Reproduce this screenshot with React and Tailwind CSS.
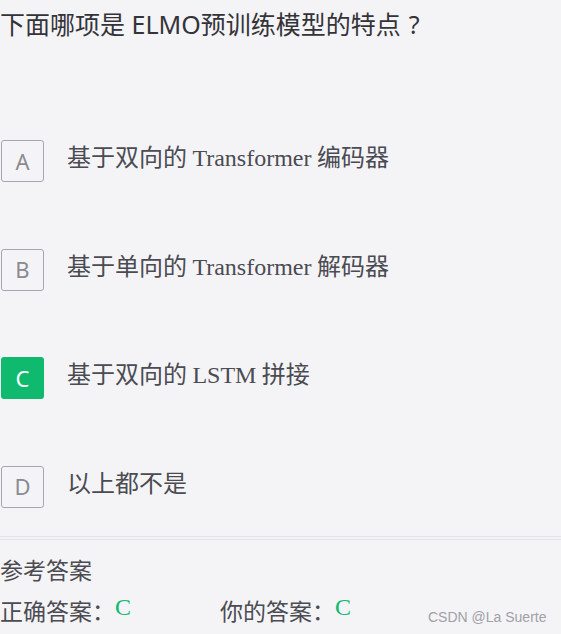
export default function App() {
  const options = [
    { k: "A", t: ["基于双向的 ", "Transformer", " 编码器"] },
    { k: "B", t: ["基于单向的 ", "Transformer", " 解码器"] },
    { k: "C", t: ["基于双向的 ", "LSTM", " 拼接"], ok: true },
    { k: "D", t: ["以上都不是"] },
  ];
  return (
    <div className="w-[561px] h-[634px] bg-[#f4f4f7] overflow-hidden relative">
      <div className="pt-[6px] text-[25px] leading-[36px] text-[#333338] font-['Noto_Sans','Noto_Sans_CJK_SC',sans-serif]">
        下面哪项是 ELMO预训练模型的特点<span className="ml-[8px]">?</span>
      </div>
      <div className="mt-[98px] flex flex-col gap-[66.6px] pl-[1px]">
        {options.map((o) => (
          <div key={o.k} className="flex items-center h-[42px]">
            <div
              className={
                o.ok
                  ? "w-[43px] h-[42px] rounded-[3px] bg-[#0fba6f] text-white flex items-center justify-center text-[22px] font-['Noto_Sans',sans-serif]"
                  : "w-[43px] h-[42px] rounded-[3px] border border-[#a6a6ad] text-[#8a8a92] flex items-center justify-center text-[22px] font-['Noto_Sans',sans-serif]"
              }
            >
              {o.k}
            </div>
            <div className="ml-[23px] -mt-[8px] text-[24px] leading-[36px] text-[#4b4b52] font-['Liberation_Serif','Noto_Sans_CJK_SC',serif]">
              {o.t.map((s, i) =>
                i === 1 ? (
                  <span key={i}>{s}</span>
                ) : (
                  <span key={i} className="font-['Noto_Sans_CJK_SC',sans-serif]">{s}</span>
                )
              )}
            </div>
          </div>
        ))}
      </div>
      <div className="absolute left-0 right-0 top-[536px] h-[1px] bg-[#e4e3ec]" />
      <div className="absolute left-0 right-0 top-[539px] h-[1px] bg-[#e4e3ec]" />
      <div className="absolute left-0 top-[552px] text-[23px] leading-[34px] text-[#4b4b52] font-['Noto_Sans_CJK_SC',sans-serif]">
        参考答案
      </div>
      <div className="absolute left-0 top-[592px] flex items-start text-[23px] leading-[36px] text-[#4b4b52] font-['Noto_Sans_CJK_SC',sans-serif]">
        <span>正确答案：</span>
        <span className="-mt-[3px] text-[24px] leading-[36px] text-[#0fba6f] font-['Liberation_Serif',serif]">C</span>
        <span className="ml-[89px]">你的答案：</span>
        <span className="-mt-[3px] text-[24px] leading-[36px] text-[#0fba6f] font-['Liberation_Serif',serif]">C</span>
      </div>
      <div className="absolute left-[428px] top-[608px] text-[14px] leading-[18px] text-[#a0a0a6] font-['Liberation_Sans',sans-serif]">
        CSDN @La Suerte
      </div>
    </div>
  );
}
